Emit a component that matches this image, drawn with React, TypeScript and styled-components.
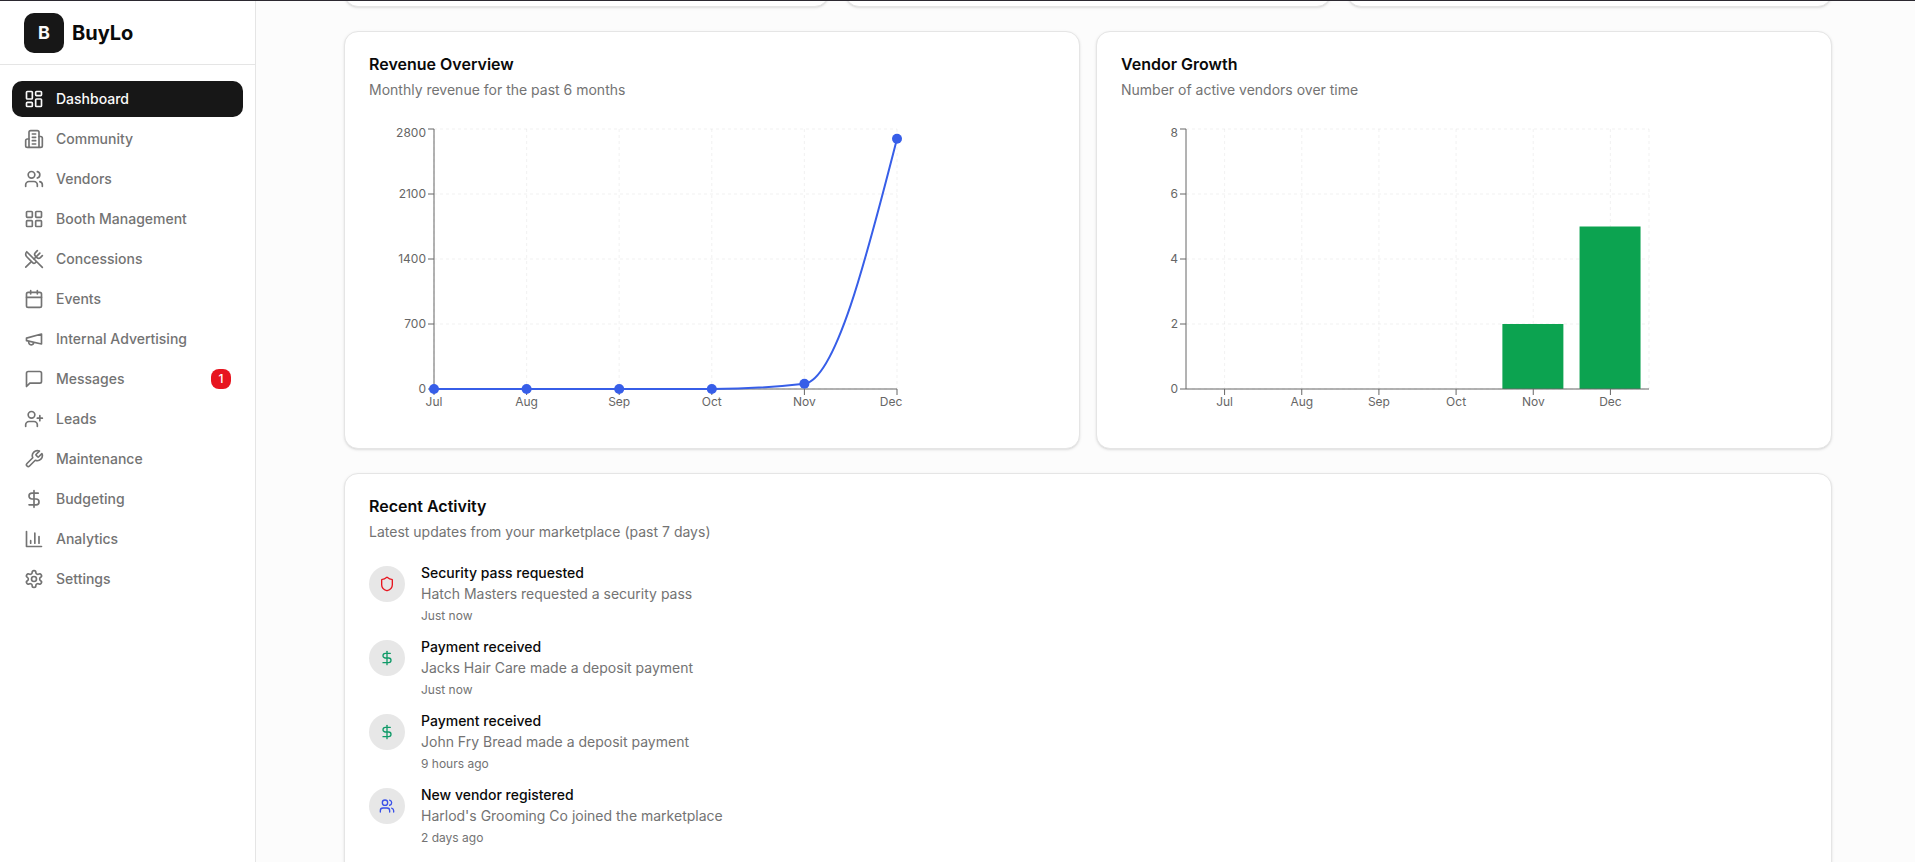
import React from "react";
import styled, { createGlobalStyle } from "styled-components";
import {
  Calendar,
  DollarSign,
  LayoutDashboard,
  LayoutGrid,
  Shield,
  UserPlus,
  UtensilsCrossed,
} from "lucide-react";

const color = {
  ink: "#0a0a0a",
  solid: "#171717",
  muted: "#737373",
  border: "#e5e5e5",
  page: "#fcfcfc",
  chip: "#e7e7e7",
  red: "#e7151f",
  blue: "#375ee8",
  green: "#0ca350",
};

const GlobalStyle = createGlobalStyle`
  *, *::before, *::after { box-sizing: border-box; }
  body {
    margin: 0;
    background: ${color.page};
    color: ${color.ink};
    font-family: Inter, "Liberation Sans", sans-serif;
    font-size: 14px;
    line-height: 20px;
    -webkit-font-smoothing: antialiased;
  }
  h1, h2, h3, p, ul { margin: 0; padding: 0; }
  ul { list-style: none; }
`;

const Shell = styled.div`
  display: flex;
  height: 100vh;
  overflow: hidden;
  border-top: 1px solid #2b2830;
`;

const Sidebar = styled.aside`
  flex: none;
  width: 256px;
  background: #fff;
  border-right: 1px solid ${color.border};
`;

const Brand = styled.div`
  display: flex;
  align-items: center;
  gap: 8px;
  height: 64px;
  padding: 0 24px;
  border-bottom: 1px solid ${color.border};
  font-size: 20px;
  line-height: 28px;
  font-weight: 700;
`;

const BrandMark = styled.span`
  display: grid;
  place-items: center;
  width: 40px;
  height: 40px;
  border-radius: 10px;
  background: ${color.solid};
  color: #fafafa;
  font-size: 18px;
`;

const NavList = styled.ul`
  display: flex;
  flex-direction: column;
  gap: 4px;
  padding: 16px 12px;
`;

const NavLink = styled.a<{ $active?: boolean }>`
  display: flex;
  align-items: center;
  gap: 12px;
  height: 36px;
  padding: 0 12px;
  border-radius: 10px;
  font-weight: 500;
  text-decoration: none;
  color: ${(p) => (p.$active ? "#fafafa" : color.muted)};
  background: ${(p) => (p.$active ? color.solid : "transparent")};
`;

const NavBadge = styled.span`
  display: grid;
  place-items: center;
  width: 20px;
  height: 20px;
  margin-left: auto;
  border-radius: 8px;
  background: ${color.red};
  color: #fff;
  font-size: 12px;
  line-height: 16px;
`;

const Main = styled.main`
  flex: 1;
  min-width: 0;
  padding: 0 59px 0 64px;
  overflow: hidden;
`;

const Content = styled.div`
  display: flex;
  flex-direction: column;
  gap: 24px;
  max-width: 1536px;
  padding: 0 24px;
`;

const Row = styled.div<{ $columns: number }>`
  display: grid;
  grid-template-columns: repeat(${(p) => p.$columns}, minmax(0, 1fr));
  gap: 16px;
`;

const Card = styled.section`
  padding: 24px;
  border: 1px solid ${color.border};
  border-radius: 14px;
  background: #fff;
  box-shadow: 0 1px 3px rgba(0, 0, 0, 0.1), 0 1px 2px -1px rgba(0, 0, 0, 0.1);
`;

const StatCardEnd = styled(Card)`
  height: 120px;
  margin-top: -114px;
`;

const ActivityCard = styled(Card)`
  padding-bottom: 48px;
`;

const CardHeader = styled.header`
  display: flex;
  flex-direction: column;
  gap: 8px;
  margin-bottom: 24px;
`;

const CardTitle = styled.h2`
  font-size: 16px;
  line-height: 16px;
  font-weight: 600;
`;

const CardText = styled.p`
  color: ${color.muted};
`;

const ChartSvg = styled.svg`
  display: block;
  width: 533px;
  max-width: 100%;
  height: 300px;
  overflow: visible;

  text {
    font-size: 12px;
    fill: #666;
  }
`;

const Feed = styled.ul`
  display: flex;
  flex-direction: column;
  gap: 16px;
`;

const FeedItem = styled.li`
  display: flex;
  gap: 16px;
`;

const FeedIcon = styled.span<{ $tone: string }>`
  display: grid;
  place-items: center;
  flex: none;
  width: 36px;
  height: 36px;
  border-radius: 50%;
  background: ${color.chip};
  color: ${(p) => p.$tone};
`;

const FeedBody = styled.div`
  display: flex;
  flex-direction: column;
  gap: 4px;
`;

const FeedTitle = styled.h3`
  font-size: 14px;
  line-height: 14px;
  font-weight: 500;
`;

const FeedTime = styled.p`
  color: ${color.muted};
  font-size: 12px;
  line-height: 16px;
`;

/* Icons */

type IconProps = { size?: number };

const makeIcon =
  (shapes: React.ReactNode) =>
  ({ size = 24 }: IconProps) => (
    <svg
      width={size}
      height={size}
      viewBox="0 0 24 24"
      fill="none"
      stroke="currentColor"
      strokeWidth="2"
      strokeLinecap="round"
      strokeLinejoin="round"
      aria-hidden="true"
    >
      {shapes}
    </svg>
  );

const BuildingIcon = makeIcon(
  <>
    <path d="M6 22V4a2 2 0 0 1 2-2h8a2 2 0 0 1 2 2v18Z" />
    <path d="M6 12H4a2 2 0 0 0-2 2v6a2 2 0 0 0 2 2h2" />
    <path d="M18 9h2a2 2 0 0 1 2 2v9a2 2 0 0 1-2 2h-2" />
    <path d="M10 6h4M10 10h4M10 14h4M10 18h4" />
  </>
);

const UsersIcon = makeIcon(
  <>
    <path d="M16 21v-2a4 4 0 0 0-4-4H6a4 4 0 0 0-4 4v2" />
    <circle cx="9" cy="7" r="4" />
    <path d="M22 21v-2a4 4 0 0 0-3-3.87" />
    <path d="M16 3.13a4 4 0 0 1 0 7.75" />
  </>
);

const MegaphoneIcon = makeIcon(
  <>
    <path d="m3 11 18-5v12L3 14v-3z" />
    <path d="M11.6 16.8a3 3 0 1 1-5.8-1.6" />
  </>
);

const MessageIcon = makeIcon(
  <path d="M21 15a2 2 0 0 1-2 2H7l-4 4V5a2 2 0 0 1 2-2h14a2 2 0 0 1 2 2z" />
);

const WrenchIcon = makeIcon(
  <path d="M14.7 6.3a1 1 0 0 0 0 1.4l1.6 1.6a1 1 0 0 0 1.4 0l3.77-3.77a6 6 0 0 1-7.94 7.94l-6.91 6.91a2.12 2.12 0 0 1-3-3l6.91-6.91a6 6 0 0 1 7.94-7.94l-3.76 3.76z" />
);

const BarsIcon = makeIcon(<path d="M3 3v18h18M18 17V9M13 17V5M8 17v-3" />);

const GearIcon = makeIcon(
  <>
    <path d="M12.22 2h-.44a2 2 0 0 0-2 2v.18a2 2 0 0 1-1 1.73l-.43.25a2 2 0 0 1-2 0l-.15-.08a2 2 0 0 0-2.73.73l-.22.38a2 2 0 0 0 .73 2.73l.15.1a2 2 0 0 1 1 1.72v.51a2 2 0 0 1-1 1.74l-.15.09a2 2 0 0 0-.73 2.73l.22.38a2 2 0 0 0 2.73.73l.15-.08a2 2 0 0 1 2 0l.43.25a2 2 0 0 1 1 1.73V20a2 2 0 0 0 2 2h.44a2 2 0 0 0 2-2v-.18a2 2 0 0 1 1-1.73l.43-.25a2 2 0 0 1 2 0l.15.08a2 2 0 0 0 2.73-.73l.22-.39a2 2 0 0 0-.73-2.73l-.15-.08a2 2 0 0 1-1-1.74v-.5a2 2 0 0 1 1-1.74l.15-.09a2 2 0 0 0 .73-2.73l-.22-.38a2 2 0 0 0-2.73-.73l-.15.08a2 2 0 0 1-2 0l-.43-.25a2 2 0 0 1-1-1.73V4a2 2 0 0 0-2-2z" />
    <circle cx="12" cy="12" r="3" />
  </>
);

/* Data */

type IconType = React.ComponentType<IconProps>;

const navItems: { label: string; icon: IconType; count?: number }[] = [
  { label: "Dashboard", icon: LayoutDashboard },
  { label: "Community", icon: BuildingIcon },
  { label: "Vendors", icon: UsersIcon },
  { label: "Booth Management", icon: LayoutGrid },
  { label: "Concessions", icon: UtensilsCrossed },
  { label: "Events", icon: Calendar },
  { label: "Internal Advertising", icon: MegaphoneIcon },
  { label: "Messages", icon: MessageIcon, count: 1 },
  { label: "Leads", icon: UserPlus },
  { label: "Maintenance", icon: WrenchIcon },
  { label: "Budgeting", icon: DollarSign },
  { label: "Analytics", icon: BarsIcon },
  { label: "Settings", icon: GearIcon },
];

const months = ["Jul", "Aug", "Sep", "Oct", "Nov", "Dec"];
const revenue = [0, 0, 0, 0, 57, 2695];
const vendors = [0, 0, 0, 0, 2, 5];

const activity: { title: string; text: string; time: string; icon: IconType; tone: string }[] = [
  {
    title: "Security pass requested",
    text: "Hatch Masters requested a security pass",
    time: "Just now",
    icon: Shield,
    tone: color.red,
  },
  {
    title: "Payment received",
    text: "Jacks Hair Care made a deposit payment",
    time: "Just now",
    icon: DollarSign,
    tone: "#109a68",
  },
  {
    title: "Payment received",
    text: "John Fry Bread made a deposit payment",
    time: "9 hours ago",
    icon: DollarSign,
    tone: "#109a68",
  },
  {
    title: "New vendor registered",
    text: "Harlod's Grooming Co joined the marketplace",
    time: "2 days ago",
    icon: UsersIcon,
    tone: "#3b52e8",
  },
];

/* Charts */

const plot = { left: 65, top: 5, width: 463, height: 260 };
const plotRight = plot.left + plot.width;
const plotBottom = plot.top + plot.height;

type Point = { x: number; y: number };

/* Monotone cubic interpolation, so the curve never dips below its points. */
function monotonePath(pts: Point[]): string {
  const n = pts.length;
  const slopes = pts.slice(1).map((p, i) => (p.y - pts[i].y) / (p.x - pts[i].x));
  const tangents: number[] = new Array(n).fill(0);
  for (let i = 1; i < n - 1; i++) {
    const a = slopes[i - 1];
    const b = slopes[i];
    const mean = (a + b) / 2;
    tangents[i] =
      (Math.sign(a) + Math.sign(b)) * Math.min(Math.abs(a), Math.abs(b), 0.5 * Math.abs(mean));
  }
  tangents[0] = (3 * slopes[0] - tangents[1]) / 2;
  tangents[n - 1] = (3 * slopes[n - 2] - tangents[n - 2]) / 2;
  let d = `M${pts[0].x},${pts[0].y}`;
  for (let i = 0; i < n - 1; i++) {
    const dx = (pts[i + 1].x - pts[i].x) / 3;
    d += `C${pts[i].x + dx},${pts[i].y + dx * tangents[i]},${pts[i + 1].x - dx},${
      pts[i + 1].y - dx * tangents[i + 1]
    },${pts[i + 1].x},${pts[i + 1].y}`;
  }
  return d;
}

type AxesProps = {
  max: number;
  step: number;
  xs: number[];
  gridXs: number[];
  labelXs: number[];
  children?: React.ReactNode;
};

function Axes({ max, step, xs, gridXs, labelXs, children }: AxesProps) {
  const values: number[] = [];
  for (let v = 0; v <= max; v += step) values.push(v);
  const yOf = (v: number) => plotBottom - (v / max) * plot.height;
  return (
    <>
      <g stroke="#ccc" strokeOpacity="0.25" strokeDasharray="3 3">
        {values.map((v) => (
          <line key={v} x1={plot.left} x2={plotRight} y1={yOf(v)} y2={yOf(v)} />
        ))}
        {gridXs.map((x) => (
          <line key={x} x1={x} x2={x} y1={plot.top} y2={plotBottom} />
        ))}
      </g>
      {children}
      <g stroke="#666">
        <line x1={plot.left} x2={plotRight} y1={plotBottom} y2={plotBottom} />
        <line x1={plot.left} x2={plot.left} y1={plot.top} y2={plotBottom} />
        {xs.map((x) => (
          <line key={x} x1={x} x2={x} y1={plotBottom} y2={plotBottom + 6} />
        ))}
        {values.map((v) => (
          <line key={v} x1={plot.left - 6} x2={plot.left} y1={yOf(v)} y2={yOf(v)} />
        ))}
      </g>
      {months.map((m, i) => (
        <text key={m} x={labelXs[i]} y={plotBottom + 17} textAnchor="middle">
          {m}
        </text>
      ))}
      {values.map((v) => (
        <text
          key={v}
          x={plot.left - 8}
          y={Math.max(yOf(v), plot.top + 4) + 4}
          textAnchor="end"
        >
          {v}
        </text>
      ))}
    </>
  );
}

function RevenueChart() {
  const xs = months.map((_, i) => plot.left + (i * plot.width) / (months.length - 1));
  const labelXs = xs.map((x) => Math.min(x, 522));
  const pts = revenue.map((v, i) => ({ x: xs[i], y: plotBottom - (v / 2800) * plot.height }));
  return (
    <ChartSvg role="img" aria-label="Monthly revenue line chart">
      <Axes max={2800} step={700} xs={xs} gridXs={xs} labelXs={labelXs} />
      <path d={monotonePath(pts)} fill="none" stroke={color.blue} strokeWidth="2" />
      {pts.map((p) => (
        <circle key={p.x} cx={p.x} cy={p.y} r="5" fill={color.blue} />
      ))}
    </ChartSvg>
  );
}

function VendorChart() {
  const band = plot.width / months.length;
  const xs = months.map((_, i) => plot.left + band * (i + 0.5));
  return (
    <ChartSvg role="img" aria-label="Active vendors bar chart">
      <Axes max={8} step={2} xs={xs} gridXs={[...xs, plotRight]} labelXs={xs}>
        {vendors.map((v, i) => {
          const h = (v / 8) * plot.height;
          return (
            <rect
              key={months[i]}
              x={plot.left + band * (i + 0.1)}
              y={plotBottom - h}
              width={61}
              height={h}
              fill={color.green}
            />
          );
        })}
      </Axes>
    </ChartSvg>
  );
}

export default function App() {
  return (
    <>
      <GlobalStyle />
      <Shell>
        <Sidebar>
          <Brand>
            <BrandMark>B</BrandMark>
            BuyLo
          </Brand>
          <nav aria-label="Main">
            <NavList>
              {navItems.map(({ label, icon: Icon, count }, i) => (
                <li key={label}>
                  <NavLink href="#" $active={i === 0} aria-current={i === 0 ? "page" : undefined}>
                    <Icon size={20} />
                    {label}
                    {count && <NavBadge>{count}</NavBadge>}
                  </NavLink>
                </li>
              ))}
            </NavList>
          </nav>
        </Sidebar>
        <Main>
          <Content>
            <Row $columns={3}>
              <StatCardEnd />
              <StatCardEnd />
              <StatCardEnd />
            </Row>
            <Row $columns={2}>
              <Card>
                <CardHeader>
                  <CardTitle>Revenue Overview</CardTitle>
                  <CardText>Monthly revenue for the past 6 months</CardText>
                </CardHeader>
                <RevenueChart />
              </Card>
              <Card>
                <CardHeader>
                  <CardTitle>Vendor Growth</CardTitle>
                  <CardText>Number of active vendors over time</CardText>
                </CardHeader>
                <VendorChart />
              </Card>
            </Row>
            <ActivityCard>
              <CardHeader>
                <CardTitle>Recent Activity</CardTitle>
                <CardText>Latest updates from your marketplace (past 7 days)</CardText>
              </CardHeader>
              <Feed>
                {activity.map(({ title, text, time, icon: Icon, tone }) => (
                  <FeedItem key={text}>
                    <FeedIcon $tone={tone}>
                      <Icon size={16} />
                    </FeedIcon>
                    <FeedBody>
                      <FeedTitle>{title}</FeedTitle>
                      <CardText>{text}</CardText>
                      <FeedTime>{time}</FeedTime>
                    </FeedBody>
                  </FeedItem>
                ))}
              </Feed>
            </ActivityCard>
          </Content>
        </Main>
      </Shell>
    </>
  );
}
